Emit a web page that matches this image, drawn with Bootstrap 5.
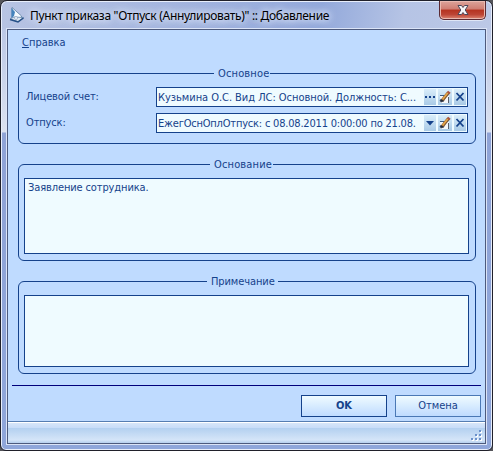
<!DOCTYPE html>
<html lang="ru">
<head>
  <meta charset="UTF-8" />
  <title>Пункт приказа "Отпуск (Аннулировать)" :: Добавление</title>
  <link
    rel="stylesheet"
    href="https://cdn.jsdelivr.net/npm/bootstrap@5.3.0/dist/css/bootstrap.min.css"
  />
  <style>
    body {
      background: #55555a;
      color: #15428b;
      font-family: "DejaVu Sans Condensed", "DejaVu Sans", sans-serif;
      font-size: 11px;
      line-height: 13px;
      overflow: hidden;
    }
    .window {
      width: 493px;
      height: 451px;
      padding: 0 6px 6px;
      border: 1px solid #20202a;
      border-radius: 7px 7px 6px 6px;
      box-shadow: inset 0 0 0 1px #e8eefb;
      background:
        linear-gradient(#b9c4e2 0, #bcc8e6 28px, #c4cfe9 60px, #dce2f0 131px, #8fa3d6 132px, #8fa6da 100%);
    }
    .titlebar {
      height: 27px;
      margin: 1px -5px 0;
      padding-left: 7px;
      border-radius: 6px 6px 0 0;
      background: linear-gradient(100deg, #b8c4e3 0, #a9b9e0 25%, #93a9db 65%, #b6c4e5 82%, #bcc8e6 100%);
    }
    .caption {
      margin-left: 5px;
      padding-top: 4px;
      color: #000;
      font-family: "Noto Sans", sans-serif;
      font-size: 12px;
      line-height: 20px;
      letter-spacing: -0.3px;
      text-shadow: 0 0 6px #dfe7f8, 0 0 8px #dfe7f8, 0 0 10px #cfdaf2;
    }
    .close-box {
      width: 47px;
      height: 19px;
      margin: -1px 5px 0 0;
      border: 1px solid #5b2a33;
      border-top: 0;
      border-radius: 0 0 5px 5px;
      background: linear-gradient(#dca49b 0, #cf7d72 45%, #b53320 50%, #bd4535 75%, #dd8673 100%);
      box-shadow: inset 0 0 0 1px #e9b9b0, 0 1px 0 #dfe6f6;
    }
    .client {
      height: 415px;
      border: 1px solid #4d5a7d;
      background: #bfdbff;
      box-shadow: 0 0 0 1px #dbe4f7;
    }
    .menu-line {
      height: 37px;
      padding-left: 14px;
      line-height: 25px;
    }
    .group {
      margin: 0 9px 0 10px;
      padding: 0 6px 0 5px;
      border: 1px solid #15428b;
      border-radius: 6px;
    }
    .group legend {
      float: none;
      height: 13px;
      margin: 0 0 7px;
      padding: 0 0 0 4px;
      font-size: 11px;
      line-height: 13px;
      letter-spacing: 0.15px;
      white-space: nowrap;
    }
    .group-main { height: 77px; }
    .group-main legend { width: 56px; margin-left: 190px; }
    .group-reason { height: 103px; margin-top: 14px; }
    .group-reason legend { width: 63px; margin-left: 186px; }
    .group-note { height: 99px; margin-top: 14px; }
    .group-note legend { width: 71px; margin-left: 183px; letter-spacing: -0.1px; }
    .field-label {
      width: 132px;
      padding-left: 2px;
      line-height: 19px;
      letter-spacing: -0.15px;
    }
    .field-row { height: 26px; }
    .field-box {
      width: 312px;
      height: 20px;
      padding: 1px;
      border: 1px solid #15428b;
      background: #effbff;
      gap: 2px;
    }
    .field-text {
      line-height: 17px;
      letter-spacing: -0.04px;
      white-space: nowrap;
    }
    .field-text-tight { letter-spacing: -0.2px; }
    .mini {
      width: 12px;
      height: 16px;
      background: linear-gradient(#d9edfa, #a9cae6);
    }
    .mini-wide { width: 14px; }
    .memo {
      padding: 2px 3px;
      border: 1px solid #15428b;
      background: #effbff;
      line-height: 14px;
      letter-spacing: -0.12px;
    }
    .memo-reason { height: 76px; }
    .memo-note { height: 72px; }
    .divider {
      height: 1px;
      margin: 11px 4px 9px;
      background: #00007b;
    }
    .action {
      width: 86px;
      height: 22px;
      padding: 0;
      border: 1px solid #15428b;
      border-radius: 0;
      background: linear-gradient(#effbff, #bfdbff);
      color: #15428b;
      font-size: 11px;
      line-height: 20px;
    }
    .action-plain { border-color: #4a78b5; }
    .status-line {
      height: 22px;
      margin-top: 4px;
      padding: 0 2px 1px 0;
      border-top: 1px solid #567db1;
      background: linear-gradient(#fff 1px, #d7e6f9 1px, #c7dcf8 6px, #b3d0f0 6px, #d5e5f8 18px, #b5cfee 21px);
    }
  </style>
</head>
<body>
  <div class="window">
    <!-- Title bar -->
    <div class="titlebar d-flex align-items-start">
      <svg class="mt-1" width="16" height="18" viewBox="0 0 16 18">
        <path d="M3 1.500 L12.500 10 L12 12.500 L3 13 Z" fill="#f5faff" stroke="#567b9f" stroke-width=".8" />
        <path d="M2.500 2 L6 6 L5 10 L2.500 12 Z" fill="#4483bc" />
        <path d="M1 13 L5 11 L14.500 11.500 L9 15.500 Z" fill="#dde7f2" stroke="#5d82ab" stroke-width=".8" />
        <path d="M1 13.500 L9 16 L14.500 12" fill="none" stroke="#254f86" stroke-width="1.500" />
        <circle cx="7" cy="12" r="1.500" fill="#f1f6ff" stroke="#8297b2" stroke-width=".6" />
      </svg>
      <div class="caption">Пункт приказа "Отпуск (Аннулировать)" :: Добавление</div>
      <div class="close-box ms-auto d-flex justify-content-center">
        <svg width="14" height="12" viewBox="0 0 14 12" style="margin-top: 3px">
          <path d="M2 1.500 H5.500 L7 3.500 L8.500 1.500 H12 L9.200 6 L12 10.500 H8.500 L7 8.500 L5.500 10.500 H2 L4.800 6 Z" fill="#f5f5f7" stroke="#4c4758" />
        </svg>
      </div>
    </div>

    <div class="client">
      <div class="menu-line"><u>С</u>правка</div>

      <!-- Main fields -->
      <fieldset class="group group-main">
        <legend>Основное</legend>
        <div class="field-row d-flex">
          <div class="field-label">Лицевой счет:</div>
          <div class="field-box d-flex">
            <div class="field-text flex-grow-1">Кузьмина О.С. Вид ЛС: Основной. Должность: С...</div>
            <svg class="mini flex-shrink-0" viewBox="0 0 12 16">
              <path d="M1 7h2v2H1z M5 7h2v2H5z M9 7h2v2H9z" fill="#15428b" />
            </svg>
            <svg class="mini mini-wide flex-shrink-0" viewBox="0 0 14 16">
              <path d="M2 6H8V7H2z" fill="#3e5d85" />
              <path d="M2 7H11V14H3z" fill="#f6f8fa" />
              <path d="M2 11L5 10L6 12L3 13z M10.500 8V14" fill="#252c3a" stroke="#333947" stroke-width=".8" />
              <path d="M4.500 11L10.500 3.500" stroke="#7b512e" stroke-width="3.200" />
              <path d="M4.500 10.500L10 3.500" stroke="#e6a649" stroke-width="1.800" />
              <path d="M9.500 2.500L12 4.500" stroke="#a95442" stroke-width="2" />
            </svg>
            <svg class="mini flex-shrink-0" viewBox="0 0 12 16">
              <path d="M2.500 4L9.500 11.500M9.500 4L2.500 11.500" stroke="#15428b" stroke-width="1.800" />
            </svg>
          </div>
        </div>
        <div class="field-row d-flex">
          <div class="field-label">Отпуск:</div>
          <div class="field-box d-flex">
            <div class="field-text field-text-tight flex-grow-1">ЕжегОснОплОтпуск: с 08.08.2011 0:00:00 по 21.08.</div>
            <svg class="mini flex-shrink-0" viewBox="0 0 12 16">
              <path d="M2 6H10L6 10.500Z" fill="#15428b" />
            </svg>
            <svg class="mini mini-wide flex-shrink-0" viewBox="0 0 14 16">
              <path d="M2 6H8V7H2z" fill="#3e5d85" />
              <path d="M2 7H11V14H3z" fill="#f6f8fa" />
              <path d="M2 11L5 10L6 12L3 13z M10.500 8V14" fill="#252c3a" stroke="#333947" stroke-width=".8" />
              <path d="M4.500 11L10.500 3.500" stroke="#7b512e" stroke-width="3.200" />
              <path d="M4.500 10.500L10 3.500" stroke="#e6a649" stroke-width="1.800" />
              <path d="M9.500 2.500L12 4.500" stroke="#a95442" stroke-width="2" />
            </svg>
            <svg class="mini flex-shrink-0" viewBox="0 0 12 16">
              <path d="M2.500 4L9.500 11.500M9.500 4L2.500 11.500" stroke="#15428b" stroke-width="1.800" />
            </svg>
          </div>
        </div>
      </fieldset>

      <fieldset class="group group-reason">
        <legend>Основание</legend>
        <div class="memo memo-reason">Заявление сотрудника.</div>
      </fieldset>

      <fieldset class="group group-note">
        <legend>Примечание</legend>
        <div class="memo memo-note"></div>
      </fieldset>

      <div class="divider"></div>
      <div class="d-flex justify-content-end gap-2 pe-1">
        <button class="btn action fw-bold">OK</button>
        <button class="btn action action-plain">Отмена</button>
      </div>

      <div class="status-line d-flex justify-content-end align-items-end">
        <!-- Resize grip -->
        <svg width="12" height="12" viewBox="0 0 12 12">
          <path d="M9 1h2v2H9z M5 5h2v2H5z M9 5h2v2H9z M1 9h2v2H1z M5 9h2v2H5z M9 9h2v2H9z" fill="#fff" />
          <path d="M8 0h2v2H8z M4 4h2v2H4z M8 4h2v2H8z M0 8h2v2H0z M4 8h2v2H4z M8 8h2v2H8z" fill="#6b91cb" />
        </svg>
      </div>
    </div>
  </div>

  <script src="https://cdn.jsdelivr.net/npm/bootstrap@5.3.0/dist/js/bootstrap.bundle.min.js"></script>
</body>
</html>
